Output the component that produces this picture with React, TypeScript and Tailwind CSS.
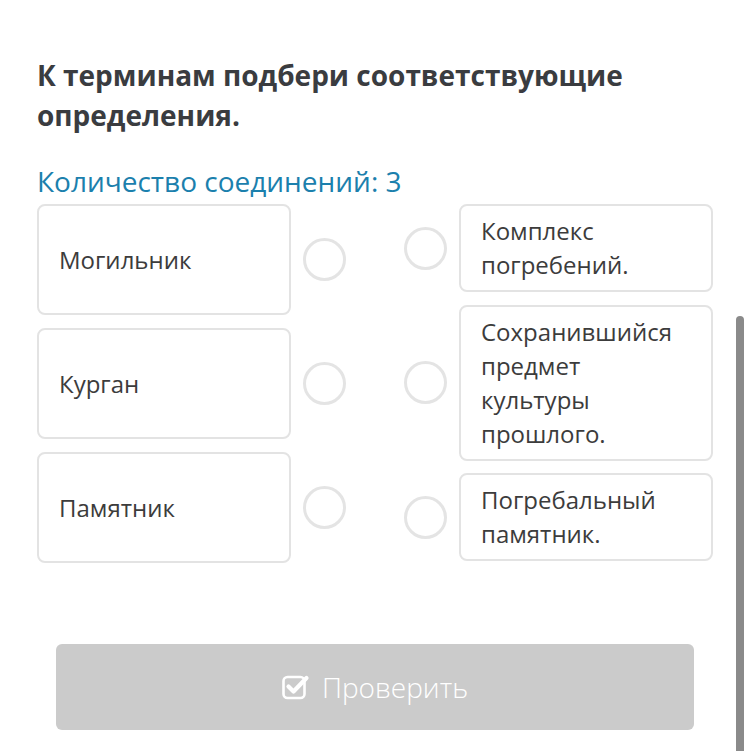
import React from 'react';

const terms = ['Могильник', 'Курган', 'Памятник'];
const definitions = [
  ['Комплекс', 'погребений.'],
  ['Сохранившийся', 'предмет', 'культуры', 'прошлого.'],
  ['Погребальный', 'памятник.'],
];

const Dot = () => (
  <div className="w-[43px] h-[43px] shrink-0 rounded-full border-[3px] border-[#e4e4e4] bg-white" />
);

const CheckIcon = () => (
  <svg width="28" height="28" viewBox="0 0 28 28" fill="none">
    <rect x="1.5" y="4" width="21" height="21" rx="4" stroke="white" strokeWidth="2.6" />
    <path d="M6.5 13.5 L11.5 18.5 L24.5 5" stroke="white" strokeWidth="4.2" strokeLinecap="round" strokeLinejoin="round" />
  </svg>
);

export default function App() {
  return (
    <div
      className="relative w-[750px] h-[751px] overflow-hidden bg-white"
      style={{ fontFamily: '"Open Sans", "Noto Sans", sans-serif' }}
    >
      <div className="pl-[37px] pr-[37px] pt-[55px]">
        {/* Question */}
        <h1 className="text-[28px] leading-[40px] font-bold text-[#3a3c40]">
          К терминам подбери соответствующие
          <br />
          определения.
        </h1>

        <p className="mt-[31px] text-[28px] leading-[30px] text-[#1b80ad]">Количество соединений: 3</p>

        {/* Matching columns */}
        <div className="mt-[8px] flex justify-between items-start w-[676px]">
          <div className="flex flex-col gap-[13px]">
            {terms.map((t) => (
              <div key={t} className="flex items-center gap-[12px]">
                <div className="w-[254px] h-[111px] flex items-center px-[20px] border-2 border-[#e3e3e3] rounded-lg text-[24px] text-[#3c3c3c]">
                  {t}
                </div>
                <Dot />
              </div>
            ))}
          </div>

          <div className="flex flex-col gap-[12.5px]">
            {definitions.map((d) => (
              <div key={d[0]} className="flex items-center gap-[12px]">
                <Dot />
                <div className="w-[254px] py-[8px] px-[20px] border-2 border-[#e3e3e3] rounded-lg text-[24px] leading-[34px] text-[#3c3c3c]">
                  {d.map((line) => (
                    <div key={line}>{line}</div>
                  ))}
                </div>
              </div>
            ))}
          </div>
        </div>

        {/* Submit */}
        <div className="mt-[81px] ml-[19px] w-[638px] h-[86px] rounded-md bg-[#cbcbcb] flex items-center justify-center gap-[12px]">
          <CheckIcon />
          <span className="text-[28px] font-light text-white">Проверить</span>
        </div>
      </div>

      {/* scrollbar overlay */}
      <div className="absolute right-[6px] top-[316px] bottom-0 w-[8px] rounded-t-sm bg-[#8a8a8a]" />
    </div>
  );
}
